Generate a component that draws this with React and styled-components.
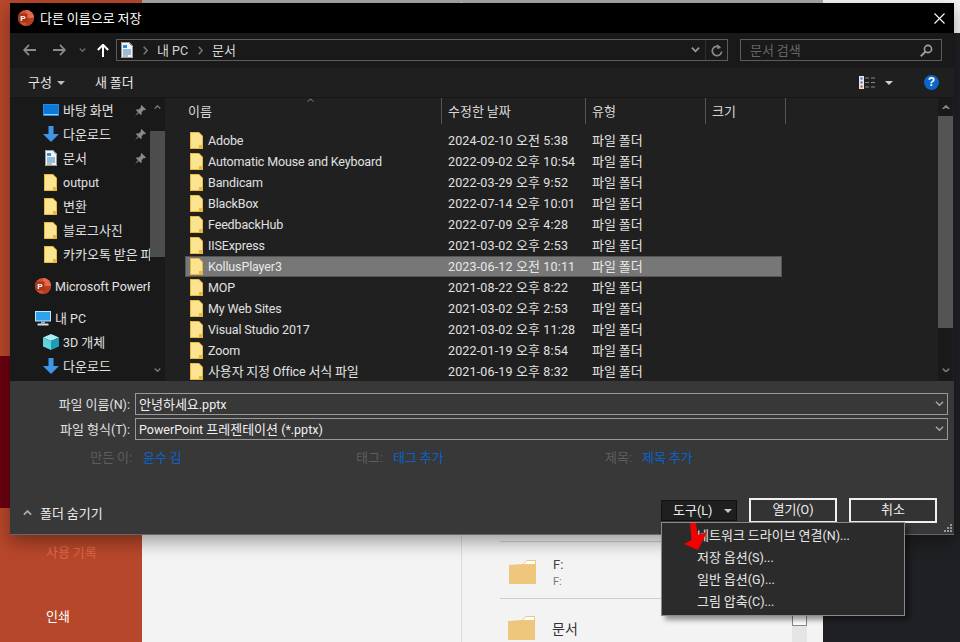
import React from "react";
import styled, { createGlobalStyle } from "styled-components";

const GlobalStyle = createGlobalStyle`
    html, body {
        margin: 0;
        padding: 0;
        width: 960px;
        height: 642px;
        overflow: hidden;
        background: #1f2023;
        font-family: "Roboto", "Noto Sans CJK KR", sans-serif;
        font-size: 12.5px;
    }
`;

const folders = [
    ["Adobe", "2024-02-10 오전 5:38"],
    ["Automatic Mouse and Keyboard", "2022-09-02 오후 10:54"],
    ["Bandicam", "2022-03-29 오후 9:52"],
    ["BlackBox", "2022-07-14 오후 10:01"],
    ["FeedbackHub", "2022-07-09 오후 4:28"],
    ["IISExpress", "2021-03-02 오후 2:53"],
    ["KollusPlayer3", "2023-06-12 오전 10:11"],
    ["MOP", "2021-08-22 오후 8:22"],
    ["My Web Sites", "2021-03-02 오후 2:53"],
    ["Visual Studio 2017", "2021-03-02 오후 11:28"],
    ["Zoom", "2022-01-19 오후 8:54"],
    ["사용자 지정 Office 서식 파일", "2021-06-19 오후 8:32"],
];

// 한글 부분만 글자 크기를 키운다
const T = ({ children }) => (
    <span>
        {children.split(/([가-힣]+(?: [가-힣]+)*)/).map((part, i) =>
            i % 2 === 1 ? <Ko key={i}>{part}</Ko> : part
        )}
    </span>
);

// 아이콘
const YellowFolder = () => (
    <svg width="13" height="17" viewBox="0 0 13 17">
        <path d="M0 0h9l4 4v13H0z" fill="#e8b93e" />
        <path d="M1 1h8l3 3v9H9v3H1z" fill="#fce38f" />
    </svg>
);

const PptIcon = ({ size = 16 }) => (
    <svg width={size} height={size} viewBox="0 0 16 16">
        <circle cx="8" cy="8" r="8" fill="#d2502f" />
        <path d="M8 0a8 8 0 0 1 8 8H8z" fill="#e8694a" />
        <path d="M8 16a8 8 0 0 0 8-8H8z" fill="#b53d20" />
        <rect x="0.5" y="3.5" width="9" height="9" rx="1" fill="#a8341a" />
        <text x="5" y="11" fontSize="8" fontWeight="700" fill="#fff" textAnchor="middle" fontFamily="Liberation Sans, sans-serif">P</text>
    </svg>
);

const DesktopIcon = () => (
    <svg width="16" height="13" viewBox="0 0 16 13">
        <rect width="16" height="12" fill="#1a8fe8" />
        <rect x="1" y="1" width="14" height="9" fill="#0f78d4" />
        <rect x="1" y="10" width="14" height="1" fill="#9bd0f8" />
    </svg>
);

const DownloadIcon = () => (
    <svg width="16" height="16" viewBox="0 0 16 16">
        <path d="M5.5 0h5v8H16l-8 8-8-8h5.500z" fill="#3f96e6" />
    </svg>
);

const DocIcon = () => (
    <svg width="12" height="16" viewBox="0 0 12 16">
        <path d="M0 0h8l4 4v12H0z" fill="#f3f3f3" />
        <path d="M.5.5h7l4 4v11H.5z" fill="none" stroke="#9a9a9a" />
        <path d="M2 3h4v3H2z" fill="#2f8fdc" />
        <path d="M2 8h8M2 10h8M2 12h8" stroke="#3f86c6" strokeWidth="1" />
        <path d="M2 14h5" stroke="#7a9a6a" strokeWidth="1" />
    </svg>
);

const PinIcon = () => (
    <svg width="11" height="11" viewBox="0 0 11 11">
        <path d="M6.500 0 11 4.500 9.800 5.300 8.800 5 6.600 7.200l.2 2-1 .8L1 5.200l.8-1 2 .2L6 2.200l-.3-1z" fill="#8a8a8a" />
        <path d="M3 7 0 11l4-3z" fill="#8a8a8a" />
    </svg>
);

const MonitorIcon = () => (
    <svg width="16" height="15" viewBox="0 0 16 15">
        <rect width="16" height="10.5" fill="#bfe6fa" />
        <rect x="1" y="1" width="14" height="8.5" fill="#2da2e8" />
        <rect x="6" y="10.5" width="4" height="2" fill="#7fb4d8" />
        <rect x="2.500" y="12.5" width="11" height="2" fill="#d6dde3" />
    </svg>
);

const CubeIcon = () => (
    <svg width="16" height="16" viewBox="0 0 16 16">
        <path d="M8 0 16 3.500 8 7 0 3.500z" fill="#a9eef2" />
        <path d="M0 3.500 8 7v9l-8-3.500z" fill="#5fd3de" />
        <path d="M16 3.500 8 7v9l8-3.500z" fill="#1c9db5" />
    </svg>
);

const Chevron = ({ up, size = 10, color = "#777", width = 2 }) => (
    <svg width={size} height={size * 0.6} viewBox="0 0 10 6">
        <path d={up ? "M1 5.200 5 1.200l4 4" : "M1 .8l4 4 4-4"} fill="none" stroke={color} strokeWidth={width} />
    </svg>
);

const Caret = ({ color = "#bdbdbd" }) => (
    <svg width="8" height="4" viewBox="0 0 8 4">
        <path d="M0 0h8L4 4z" fill={color} />
    </svg>
);

const NavArrow = ({ flip, color }) => (
    <svg width="13" height="12" viewBox="0 0 13 12" style={{ transform: flip ? "scaleX(-1)" : undefined }}>
        <path d="M6 .8 1.200 6 6 11.200M1.500 6H13" fill="none" stroke={color} strokeWidth="1.8" />
    </svg>
);

const UpArrow = () => (
    <svg width="12" height="13" viewBox="0 0 12 13">
        <path d="M.8 6 6 .8 11.200 6M6 1v12" fill="none" stroke="#fff" strokeWidth="2" />
    </svg>
);

const Crumb = () => (
    <svg width="5" height="9" viewBox="0 0 5 9">
        <path d="M.7.7 4.200 4.500.7 8.300" fill="none" stroke="#777" strokeWidth="1.5" />
    </svg>
);

const Refresh = () => (
    <svg width="12" height="13" viewBox="0 0 12 13">
        <path d="M8.800 3.200A4.700 4.700 0 1 0 10.700 7.500" fill="none" stroke="#8a8a8a" strokeWidth="1.7" />
        <path d="M6.200 0v5l4-1z" fill="#8a8a8a" />
    </svg>
);

const Magnifier = () => (
    <svg width="13" height="13" viewBox="0 0 13 13">
        <circle cx="8" cy="5" r="3.600" fill="none" stroke="#a0a0a0" strokeWidth="1.6" />
        <path d="M5.400 7.600.8 12.200" stroke="#a0a0a0" strokeWidth="2" />
    </svg>
);

const ViewIcon = () => (
    <svg width="17" height="13" viewBox="0 0 17 13">
        <rect width="5" height="13" fill="#e6e6e6" />
        <rect x="1.500" y="1.500" width="2" height="2" fill="#3a6fd8" />
        <rect x="1.500" y="5.500" width="2" height="2" fill="#3a6fd8" />
        <rect x="1.500" y="9.500" width="2" height="2" fill="#d83a3a" />
        <path d="M6 2h4M12 2h4M6 6.500h4M12 6.500h4M6 11h4M12 11h4" stroke="#888" strokeWidth="1" />
    </svg>
);

const CloseIcon = () => (
    <svg width="11" height="11" viewBox="0 0 11 11">
        <path d="M.5.5l10 10M10.500.5l-10 10" stroke="#fff" strokeWidth="1.1" />
    </svg>
);

const Grip = () => (
    <svg width="8" height="8" viewBox="0 0 8 8" fill="#999">
        <rect x="6" y="0" width="2" height="2" />
        <rect x="3" y="3" width="2" height="2" />
        <rect x="6" y="3" width="2" height="2" />
        <rect x="0" y="6" width="2" height="2" />
        <rect x="3" y="6" width="2" height="2" />
        <rect x="6" y="6" width="2" height="2" />
    </svg>
);

const BgFolder = () => (
    <svg width="27" height="24" viewBox="0 0 27 24">
        <path d="M0 5 14 4 18 0h9v24H0z" fill="#eec77c" />
        <path d="M15 4l3-3h8v3z" fill="#fff" />
    </svg>
);

const RedArrow = () => (
    <svg width="26" height="28" viewBox="0 0 26 28">
        <path d="M7 0h6l1.500 12 9.500-3L15 27 1 21l7.500-4z" fill="#f40000" />
    </svg>
);

function App() {
    return (
        <>
            <GlobalStyle />
            <Page>
                <BackSidebar>
                    <ActiveBand />
                    <BackNav $dim><T>사용 기록</T></BackNav>
                    <BackNav><T>인쇄</T></BackNav>
                </BackSidebar>
                <BackCenter />
                <BackPanel>
                    <BackLine />
                    <BackFolderRow>
                        <BgFolder />
                        <BackNames>
                            <BackName>F:</BackName>
                            <BackPath>F:</BackPath>
                        </BackNames>
                    </BackFolderRow>
                    <BackLine />
                    <BackFolderRow $shift>
                        <BgFolder />
                        <BackDoc>문서</BackDoc>
                    </BackFolderRow>
                    <BackCheck />
                </BackPanel>
                <BackDark />

                <Dialog>
                    <TitleBar>
                        <PptIcon />
                        <TitleText><T>다른 이름으로 저장</T></TitleText>
                        <CloseBtn><CloseIcon /></CloseBtn>
                    </TitleBar>

                    <AddressBar>
                        <NavBtn $w={30}><NavArrow color="#8a8a8a" /></NavBtn>
                        <NavBtn $w={30}><NavArrow flip color="#8a8a8a" /></NavBtn>
                        <NavBtn $w={16}><Chevron size={7} color="#666" /></NavBtn>
                        <NavBtn $w={26}><UpArrow /></NavBtn>
                        <AddressBox>
                            <DocIcon />
                            <CrumbSlot><Crumb /></CrumbSlot>
                            <T>내 PC</T>
                            <CrumbSlot><Crumb /></CrumbSlot>
                            <T>문서</T>
                            <AddressTail>
                                <Chevron size={9} color="#999" />
                                <TailDivider />
                                <Refresh />
                            </AddressTail>
                        </AddressBox>
                        <SearchBox>
                            <T>문서 검색</T>
                            <Magnifier />
                        </SearchBox>
                    </AddressBar>

                    <CommandBar>
                        <CommandBtn><T>구성</T> <Caret /></CommandBtn>
                        <CommandBtn $gap><T>새 폴더</T></CommandBtn>
                        <CommandRight>
                            <ViewIcon />
                            <Caret color="#d0d0d0" />
                            <HelpBadge>?</HelpBadge>
                        </CommandRight>
                    </CommandBar>

                    <Browser>
                        <NavPane>
                            <NavList>
                                <NavRow $indent={32}><IconBox><DesktopIcon /></IconBox><NavLabel><T>바탕 화면</T></NavLabel><PinSlot><PinIcon /></PinSlot></NavRow>
                                <NavRow $indent={32}><IconBox><DownloadIcon /></IconBox><NavLabel><T>다운로드</T></NavLabel><PinSlot><PinIcon /></PinSlot></NavRow>
                                <NavRow $indent={32}><IconBox><DocIcon /></IconBox><NavLabel><T>문서</T></NavLabel><PinSlot><PinIcon /></PinSlot></NavRow>
                                <NavRow $indent={32}><IconBox><YellowFolder /></IconBox><NavLabel>output</NavLabel></NavRow>
                                <NavRow $indent={32}><IconBox><YellowFolder /></IconBox><NavLabel><T>변환</T></NavLabel></NavRow>
                                <NavRow $indent={32}><IconBox><YellowFolder /></IconBox><NavLabel><T>블로그사진</T></NavLabel></NavRow>
                                <NavRow $indent={32}><IconBox><YellowFolder /></IconBox><NavLabel><T>카카오톡 받은 파일</T></NavLabel></NavRow>
                                <NavRow $indent={24} $top={8}><IconBox><PptIcon /></IconBox><NavLabel>Microsoft PowerPoint</NavLabel></NavRow>
                                <NavRow $indent={24} $top={8}><IconBox><MonitorIcon /></IconBox><NavLabel><T>내 PC</T></NavLabel></NavRow>
                                <NavRow $indent={32}><IconBox><CubeIcon /></IconBox><NavLabel><T>3D 개체</T></NavLabel></NavRow>
                                <NavRow $indent={32}><IconBox><DownloadIcon /></IconBox><NavLabel><T>다운로드</T></NavLabel></NavRow>
                            </NavList>
                            <NavScroll>
                                <ScrollEnd><Chevron up size={7} color="#777" /></ScrollEnd>
                                <NavThumb />
                                <ScrollEnd $bottom><Chevron size={7} color="#777" /></ScrollEnd>
                            </NavScroll>
                        </NavPane>

                        <ListPane>
                            <ListBody>
                                <HeaderRow>
                                    <SortMark><Chevron up size={7} color="#999" width={1.3} /></SortMark>
                                    <HeaderCell $w={274}><T>이름</T></HeaderCell>
                                    <HeaderCell $w={144}><T>수정한 날짜</T></HeaderCell>
                                    <HeaderCell $w={120}><T>유형</T></HeaderCell>
                                    <HeaderCell $w={80}><T>크기</T></HeaderCell>
                                </HeaderRow>
                                <Rows>
                                    {folders.map(([name, date]) => (
                                        <FileRow key={name} $selected={name === "KollusPlayer3"}>
                                            <NameCell><YellowFolder /><T>{name}</T></NameCell>
                                            <DateCell><T>{date}</T></DateCell>
                                            <TypeCell><T>파일 폴더</T></TypeCell>
                                        </FileRow>
                                    ))}
                                </Rows>
                            </ListBody>
                            <ListScroll>
                                <ScrollEnd $h={18}><Chevron up size={8} color="#8a8a8a" /></ScrollEnd>
                                <ListThumb />
                                <ScrollEnd $bottom><Chevron size={8} color="#777" /></ScrollEnd>
                            </ListScroll>
                        </ListPane>
                    </Browser>

                    <SavePanel>
                        <FieldRow>
                            <FieldLabel><T>파일 이름(N):</T></FieldLabel>
                            <FieldBox><T>안녕하세요.pptx</T><FieldChevron><Chevron size={9} color="#aaa" width={1.4} /></FieldChevron></FieldBox>
                        </FieldRow>
                        <FieldRow $top={3}>
                            <FieldLabel><T>파일 형식(T):</T></FieldLabel>
                            <FieldBox><T>PowerPoint 프레젠테이션 (*.pptx)</T><FieldChevron><Chevron size={9} color="#aaa" width={1.4} /></FieldChevron></FieldBox>
                        </FieldRow>
                        <MetaRow>
                            <MetaLabel $w={122}><T>만든 이:</T></MetaLabel><MetaLink $w={213}><T>윤수 김</T></MetaLink>
                            <MetaLabel $w={26}><T>태그:</T></MetaLabel><MetaLink $w={212}><T>태그 추가</T></MetaLink>
                            <MetaLabel $w={26}><T>제목:</T></MetaLabel><MetaLink><T>제목 추가</T></MetaLink>
                        </MetaRow>
                        <ActionRow>
                            <HideFolders><Chevron up size={9} color="#aaa" /><T>폴더 숨기기</T></HideFolders>
                            <ToolsBtn><T>도구(L)</T><Caret color="#c8c8c8" /></ToolsBtn>
                            <MainBtn><T>열기(O)</T></MainBtn>
                            <MainBtn><T>취소</T></MainBtn>
                        </ActionRow>
                        <GripCorner><Grip /></GripCorner>
                    </SavePanel>
                </Dialog>

                <ToolsMenu>
                    <MenuItem><T>네트워크 드라이브 연결(N)...</T></MenuItem>
                    <MenuItem><T>저장 옵션(S)...</T></MenuItem>
                    <MenuItem><T>일반 옵션(G)...</T></MenuItem>
                    <MenuItem><T>그림 압축(C)...</T></MenuItem>
                </ToolsMenu>
                <ArrowMark><RedArrow /></ArrowMark>
            </Page>
        </>
    );
}

const Ko = styled.span`
    font-family: "Noto Sans CJK KR", sans-serif;
    font-size: 13px;
    line-height: 1;
`;

const Page = styled.div`
    position: relative;
    display: flex;
    width: 960px;
    height: 642px;
    overflow: hidden;
    background: #1f2023;
`;

const BackSidebar = styled.div`
    width: 142px;
    height: 642px;
    flex-shrink: 0;
    background: #b7472a;
    display: flow-root;
`;

const ActiveBand = styled.div`
    margin-top: 356px;
    height: 152px;
    background: #6b0010;
`;

const BackNav = styled.div`
    height: 18px;
    line-height: 18px;
    padding-left: 46px;
    margin-top: ${(p) => (p.$dim ? "36px" : "46px")};
    color: ${(p) => (p.$dim ? "#e0664c" : "#fff")};
`;

const BackCenter = styled.div`
    width: 320px;
    flex-shrink: 0;
    background: linear-gradient(#a5a5a5 3px, #f3f3f3 3px);
    border-right: 1px solid #dcdcdc;
    border-image: linear-gradient(#a5a5a5 3px, #dcdcdc 3px) 1;
    box-sizing: border-box;
`;

const BackPanel = styled.div`
    position: relative;
    width: 361px;
    flex-shrink: 0;
    padding-top: 541px;
    box-sizing: border-box;
    background: linear-gradient(#a5a5a5 3px, #f3f3f3 3px);
`;

const BackLine = styled.div`
    margin-left: 38px;
    height: 1px;
    background: #cfcfcf;
`;

const BackFolderRow = styled.div`
    display: flex;
    align-items: ${(p) => (p.$shift ? "center" : "flex-start")};
    gap: 17px;
    height: ${(p) => (p.$shift ? "58px" : "56px")};
    padding-left: ${(p) => (p.$shift ? "46px" : "47px")};
    padding-top: ${(p) => (p.$shift ? "0" : "18px")};
    box-sizing: border-box;
`;

const BackNames = styled.div`
    display: flex;
    flex-direction: column;
`;

const BackName = styled.div`
    font-size: 13px;
    line-height: 14px;
    margin-top: -2px;
    color: #444;
`;

const BackPath = styled.div`
    font-size: 11px;
    line-height: 14px;
    margin-top: 3px;
    color: #777;
`;

const BackDoc = styled.div`
    font-family: "Noto Sans CJK KR", sans-serif;
    font-size: 14px;
    line-height: 1;
    color: #333;
`;

const BackCheck = styled.div`
    position: absolute;
    left: 330px;
    top: 615px;
    width: 13px;
    height: 9px;
    background: #fff;
    border: 1px solid #888;
    box-shadow: 0 11px 0 0 #e5e5e5, 0 17px 0 0 #e5e5e5;
`;

const BackDark = styled.div`
    flex: 1;
    background: linear-gradient(#f3f3f3 33px, #1f2023 33px);
`;

const Dialog = styled.div`
    position: absolute;
    left: 10px;
    top: 3px;
    width: 944px;
    height: 531px;
    display: flex;
    flex-direction: column;
    background: #383838;
    color: #f0f0f0;
    box-shadow: 0 1px 0 #666, 0 8px 16px rgba(0, 0, 0, 0.35);
`;

const TitleBar = styled.div`
    display: flex;
    align-items: center;
    height: 30px;
    flex-shrink: 0;
    padding: 0 10px 0 8px;
    background: #000;
    box-sizing: border-box;
`;

const TitleText = styled.div`
    margin-left: 6px;
    color: #fff;
`;

const CloseBtn = styled.div`
    margin-left: auto;
    margin-right: -1px;
    display: flex;
`;

const AddressBar = styled.div`
    display: flex;
    align-items: center;
    height: 35px;
    flex-shrink: 0;
    padding: 0 0 1px 4px;
    background: #191919;
    box-sizing: border-box;
`;

const NavBtn = styled.div`
    width: ${(p) => p.$w}px;
    display: flex;
    align-items: center;
    justify-content: center;
`;

const AddressBox = styled.div`
    display: flex;
    align-items: center;
    width: 612px;
    height: 22px;
    padding-left: 4px;
    box-sizing: border-box;
    border: 1px solid #5c5c5c;
    color: #d8d8d8;
`;

const CrumbSlot = styled.div`
    width: 24px;
    display: flex;
    justify-content: center;
`;

const AddressTail = styled.div`
    margin-left: auto;
    display: flex;
    align-items: center;
    gap: 5px;
    padding-right: 4px;
    height: 100%;
`;

const TailDivider = styled.div`
    width: 1px;
    height: 100%;
    background: #2e2e2e;
`;

const SearchBox = styled.div`
    display: flex;
    align-items: center;
    justify-content: space-between;
    width: 202px;
    height: 22px;
    margin-left: 12px;
    padding: 0 8px 0 9px;
    box-sizing: border-box;
    border: 1px solid #5c5c5c;
    color: #666;
`;

const CommandBar = styled.div`
    display: flex;
    align-items: center;
    height: 30px;
    flex-shrink: 0;
    padding-left: 18px;
    background: #1f1f1f;
    border-bottom: 1px solid #161616;
    box-sizing: border-box;
`;

const CommandBtn = styled.div`
    display: flex;
    align-items: center;
    gap: 5px;
    margin-left: ${(p) => (p.$gap ? "30px" : "0")};
    color: #e8e8e8;
`;

const CommandRight = styled.div`
    margin-left: auto;
    display: flex;
    align-items: center;
    gap: 9px;
    padding-right: 15px;
`;

const HelpBadge = styled.div`
    width: 15px;
    height: 15px;
    margin-left: 22px;
    border-radius: 50%;
    background: #0a66c8;
    color: #fff;
    font-family: "Liberation Sans", sans-serif;
    font-size: 12px;
    font-weight: 700;
    line-height: 15px;
    text-align: center;
`;

const Browser = styled.div`
    display: flex;
    height: 283px;
    flex-shrink: 0;
    background: #202020;
`;

const NavPane = styled.div`
    display: flex;
    width: 155px;
    flex-shrink: 0;
    background: #191919;
    margin-right: 3px;
`;

const NavList = styled.div`
    width: 140px;
    flex-shrink: 0;
    overflow: hidden;
`;

const NavRow = styled.div`
    display: flex;
    align-items: center;
    height: 24px;
    margin-top: ${(p) => p.$top || 0}px;
    padding-left: ${(p) => p.$indent}px;
    box-sizing: border-box;
    color: #e0e0e0;
    white-space: nowrap;
`;

const IconBox = styled.div`
    width: 17px;
    flex-shrink: 0;
    display: flex;
    align-items: center;
    justify-content: center;
`;

const NavLabel = styled.span`
    margin-left: 4px;
`;

const PinSlot = styled.div`
    margin-left: auto;
    padding-right: 4px;
    display: flex;
`;

const NavScroll = styled.div`
    width: 15px;
    display: flex;
    flex-direction: column;
`;

const ScrollEnd = styled.div`
    height: ${(p) => p.$h || 18}px;
    display: flex;
    align-items: center;
    justify-content: center;
    margin-top: ${(p) => (p.$bottom ? "auto" : "0")};
    padding-bottom: ${(p) => (p.$bottom ? "4px" : "0")};
    box-sizing: border-box;
`;

const NavThumb = styled.div`
    height: 126px;
    margin-top: 15px;
    background: #4d4d4d;
`;

const ListPane = styled.div`
    flex: 1;
    display: flex;
    min-width: 0;
`;

const ListBody = styled.div`
    flex: 1;
    min-width: 0;
    overflow: hidden;
`;

const HeaderRow = styled.div`
    position: relative;
    display: flex;
    height: 26px;
`;

const SortMark = styled.div`
    position: absolute;
    left: 139px;
    top: 0;
    display: flex;
`;

const HeaderCell = styled.div`
    width: ${(p) => p.$w}px;
    padding-left: ${(p) => (p.$w === 274 ? "20px" : "6px")};
    padding-top: 2px;
    box-sizing: border-box;
    border-right: 1px solid #555;
    line-height: 24px;
    color: #d8d8d8;
`;

const Rows = styled.div`
    display: flex;
    flex-direction: column;
    margin-top: 6px;
    margin-left: 17px;
    width: 597px;
`;

const FileRow = styled.div`
    display: flex;
    align-items: center;
    height: 21px;
    flex-shrink: 0;
    box-sizing: border-box;
    background: ${(p) => (p.$selected ? "#777" : "transparent")};
    border: 1px solid ${(p) => (p.$selected ? "#555" : "transparent")};
    color: ${(p) => (p.$selected ? "#e8e8e8" : "#e0e0e0")};
    white-space: nowrap;
`;

const NameCell = styled.div`
    display: flex;
    align-items: center;
    gap: 5px;
    width: 262px;
    padding-left: 4px;
    box-sizing: border-box;
    letter-spacing: -0.14px;
`;

const DateCell = styled.div`
    width: 144px;
    letter-spacing: 0.15px;
`;

const TypeCell = styled.div`
    flex: 1;
`;

const ListScroll = styled.div`
    width: 15px;
    flex-shrink: 0;
    margin-right: 1px;
    display: flex;
    flex-direction: column;
    background: #191919;
`;

const ListThumb = styled.div`
    height: 212px;
    background: #545454;
`;

const SavePanel = styled.div`
    position: relative;
    flex: 1;
    display: flex;
    flex-direction: column;
    padding-top: 12px;
    box-sizing: border-box;
`;

const FieldRow = styled.div`
    display: flex;
    align-items: center;
    margin-top: ${(p) => p.$top || 0}px;
`;

const FieldLabel = styled.div`
    width: 120px;
    flex-shrink: 0;
    text-align: right;
    color: #e0e0e0;
`;

const FieldBox = styled.div`
    display: flex;
    align-items: center;
    width: 813px;
    height: 22px;
    margin-left: 5px;
    padding-left: 3px;
    box-sizing: border-box;
    border: 1px solid #999;
    color: #f0f0f0;
`;

const FieldChevron = styled.div`
    margin-left: auto;
    padding-right: 3px;
    display: flex;
`;

const MetaRow = styled.div`
    display: flex;
    align-items: center;
    height: 18px;
    margin-top: 8px;
`;

const MetaLabel = styled.div`
    width: ${(p) => p.$w}px;
    flex-shrink: 0;
    text-align: right;
    color: #5e5e5e;
    white-space: nowrap;
    margin-right: 11px;
`;

const MetaLink = styled.div`
    width: ${(p) => p.$w || 100}px;
    flex-shrink: 0;
    color: #0a62c8;
`;

const ActionRow = styled.div`
    display: flex;
    align-items: center;
    height: 25px;
    margin-top: 32px;
`;

const HideFolders = styled.div`
    display: flex;
    align-items: center;
    gap: 8px;
    padding-left: 13px;
    margin-top: 5px;
    margin-right: auto;
    color: #eee;
`;

const ToolsBtn = styled.div`
    display: flex;
    align-items: center;
    justify-content: space-between;
    width: 76px;
    height: 21px;
    padding: 0 4px 0 11px;
    box-sizing: border-box;
    background: #1f1f1f;
    border: 1px solid #111;
    color: #eee;
`;

const MainBtn = styled.div`
    width: 88px;
    height: 25px;
    margin-left: 12px;
    box-sizing: border-box;
    border: 2px solid #f0f0f0;
    background: #333;
    color: #eee;
    line-height: 20px;
    text-align: center;
    &:last-child {
        margin-right: 17px;
    }
`;

const GripCorner = styled.div`
    position: absolute;
    right: 2px;
    bottom: 2px;
    display: flex;
`;

const ToolsMenu = styled.div`
    position: absolute;
    left: 661px;
    top: 522px;
    width: 244px;
    height: 94px;
    padding-top: 2px;
    box-sizing: border-box;
    display: flex;
    flex-direction: column;
    background: #2b2b2b;
    border: 1px solid #8a8a8a;
    box-shadow: 4px 4px 5px rgba(0, 0, 0, 0.4);
`;

const MenuItem = styled.div`
    height: 22px;
    line-height: 22px;
    padding-left: 35px;
    color: #e8e8e8;
`;

const ArrowMark = styled.div`
    position: absolute;
    left: 683px;
    top: 523px;
    display: flex;
`;

export default App;
